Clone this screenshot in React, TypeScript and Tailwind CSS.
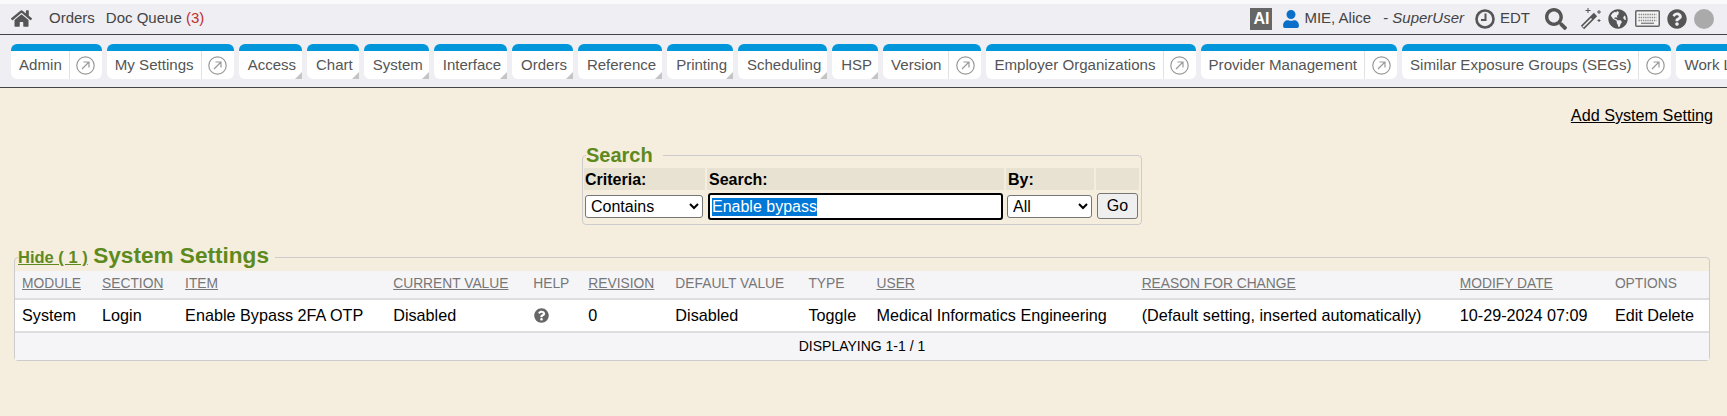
import { useEffect, useRef } from 'react';
import { FaGlobeAmericas, FaHome, FaQuestionCircle, FaSearch, FaUser } from 'react-icons/fa';

const tabs = [
  { label: 'Admin', link: true },
  { label: 'My Settings', link: true },
  { label: 'Access' },
  { label: 'Chart' },
  { label: 'System' },
  { label: 'Interface' },
  { label: 'Orders' },
  { label: 'Reference' },
  { label: 'Printing' },
  { label: 'Scheduling' },
  { label: 'HSP' },
  { label: 'Version', link: true },
  { label: 'Employer Organizations', link: true },
  { label: 'Provider Management', link: true },
  { label: 'Similar Exposure Groups (SEGs)', link: true },
  { label: 'Work List', link: true },
];

const columns = [
  { label: 'MODULE', value: 'System', sort: true, width: 'w-[81px]' },
  { label: 'SECTION', value: 'Login', sort: true, width: 'w-[83px]' },
  { label: 'ITEM', value: 'Enable Bypass 2FA OTP', sort: true, width: 'w-[208px]' },
  { label: 'CURRENT VALUE', value: 'Disabled', sort: true, width: 'w-[140px]' },
  { label: 'HELP', value: '', width: 'w-[55px]' },
  { label: 'REVISION', value: '0', sort: true, width: 'w-[87px]' },
  { label: 'DEFAULT VALUE', value: 'Disabled', width: 'w-[133px]' },
  { label: 'TYPE', value: 'Toggle', width: 'w-[68px]' },
  { label: 'USER', value: 'Medical Informatics Engineering', sort: true, width: 'w-[265px]' },
  { label: 'REASON FOR CHANGE', value: '(Default setting, inserted automatically)', sort: true, width: 'w-[318px]' },
  { label: 'MODIFY DATE', value: '10-29-2024 07:09', sort: true, width: 'w-[155px]' },
  { label: 'OPTIONS', value: 'Edit Delete', width: 'w-[100px]' },
];

function OpenIcon() {
  return (
    <svg width="19" height="19" viewBox="0 0 19 19" fill="none" stroke="#999" strokeWidth="1.2">
      <circle cx="9.5" cy="9.5" r="8.7" />
      <path d="M6 13 L13 6 M7.5 6 H13 V11.5" />
    </svg>
  );
}

function ClockIcon() {
  return (
    <svg width="20" height="20" viewBox="0 0 20 20" fill="none" stroke="#555">
      <circle cx="10" cy="10" r="8.5" strokeWidth="2.6" />
      <path d="M10.5 4.5 V11 H6" strokeWidth="2" />
    </svg>
  );
}

function WandIcon() {
  return (
    <svg width="22" height="23" viewBox="0 0 22 23" fill="none">
      <path d="M2.5 20.5 L15.5 7.5" stroke="#555" strokeWidth="4.6" />
      <path d="M3 20 L11.5 11.5" stroke="#f2f2f2" strokeWidth="1.6" />
      <path d="M8 1v5M5.5 3.5h5M19 3v4M17 5h4M19 12v3M17.5 13.5h3" stroke="#555" strokeWidth="1" />
    </svg>
  );
}

function KeyboardIcon() {
  return (
    <svg width="25" height="17" viewBox="0 0 25 17" fill="none">
      <rect x="0.75" y="0.75" width="23.5" height="15.5" rx="1" fill="#f4f4f4" stroke="#666" strokeWidth="1.5" />
      <path
        d="M3.5 4.5h18M3.5 7.5h18M3.5 10.5h18"
        stroke="#888"
        strokeWidth="1.6"
        strokeDasharray="1.4 0.8"
      />
      <path d="M6 13.3h13" stroke="#888" strokeWidth="1.5" />
    </svg>
  );
}

function MenuTab({ label, link }: { label: string; link?: boolean }) {
  if (link) {
    return (
      <div className="flex h-[35px] shrink-0 rounded-[6px] border-t-[7px] border-[#0096d9] bg-white text-[15.1px]">
        <span className="pl-[8px] pr-[7px] leading-[27px]">{label}</span>
        <span className="flex w-[33px] items-center justify-center border-l border-[#e2e2e2]">
          <OpenIcon />
        </span>
      </div>
    );
  }
  return (
    <div className="relative h-[35px] shrink-0 rounded-t-[6px] rounded-bl-[6px] border-t-[7px] border-[#0096d9] bg-white pl-[9px] pr-[6px] leading-[27px]">
      {label}
      <span className="absolute bottom-0 right-0 h-0 w-0 border-b-[7px] border-l-[7px] border-b-[#c4c4c4] border-l-transparent" />
    </div>
  );
}

export default function App() {
  const inputRef = useRef<HTMLInputElement>(null);

  // the search term shows selected in the picture
  useEffect(() => {
    inputRef.current?.focus();
    inputRef.current?.select();
  }, []);

  return (
    <div className="h-[416px] overflow-hidden bg-[#f5eddd] font-['Liberation_Sans',Arial,sans-serif] text-[16.2px] text-black">
      <div className="h-[4px] bg-[#fafafa]" />

      {/* top bar */}
      <div className="flex h-[31px] items-center border-b border-[#444] bg-[#eeeef3] pb-[1px] text-[15px] text-[#444]">
        <FaHome className="ml-[11px] text-[21px] text-[#555]" />
        <span className="ml-[17px]">Orders</span>
        <span className="ml-[11px]">
          Doc Queue <span className="text-[#c0302a]">(3)</span>
        </span>
        <div className="ml-auto flex items-center pr-[13px]">
          <span className="flex h-[22px] w-[22px] items-center justify-center bg-[#666] text-[16px] font-bold text-white">
            AI
          </span>
          <FaUser className="ml-[10px] text-[18px] text-[#0a6fc9]" />
          <span className="ml-[4px]">MIE, Alice</span>
          <span className="ml-[12px]">
            - <i>SuperUser</i>
          </span>
          <span className="ml-[11px]">
            <ClockIcon />
          </span>
          <span className="ml-[5px]">EDT</span>
          <FaSearch className="ml-[15px] text-[22px] text-[#555]" />
          <span className="ml-[13px]">
            <WandIcon />
          </span>
          <FaGlobeAmericas className="ml-[6px] text-[20px] text-[#555]" />
          <span className="ml-[7px]">
            <KeyboardIcon />
          </span>
          <FaQuestionCircle className="ml-[7px] text-[20px] text-[#555]" />
          <span className="ml-[7px] h-[20px] w-[20px] rounded-full bg-[#aaa]" />
        </div>
      </div>

      {/* menu tabs */}
      <div className="flex h-[53px] gap-[5px] overflow-hidden border-b border-[#444] bg-[#eeeef3] pl-[11px] pt-[9px] text-[15px] text-[#555]">
        {tabs.map((tab) => (
          <MenuTab key={tab.label} label={tab.label} link={tab.link} />
        ))}
      </div>

      <div className="pl-[14px] pr-[17px]">
        <div className="-mr-[3px] mt-[15px] flex h-[24px] items-center justify-end">
          <span className="underline">Add System Setting</span>
        </div>

        {/* search */}
        <fieldset className="ml-[568px] mt-[15px] w-[560px] rounded-[4px] border border-[#ccc] pb-[4px] pl-[1px]">
          <legend className="ml-[2px] pb-[1px] pr-[10px] pt-[1px] text-[20px] font-bold leading-[24px] text-[#5e8a1d]">Search</legend>
          <div className="grid grid-cols-[121px_297px_88px_43px] gap-x-[2px] gap-y-[3px]">
            <div className="h-[22px] bg-[#e8e2d2] pl-[1px] text-[16px] font-bold leading-[23px]">Criteria:</div>
            <div className="h-[22px] bg-[#e8e2d2] pl-[2px] text-[16px] font-bold leading-[23px]">Search:</div>
            <div className="h-[22px] bg-[#e8e2d2] pl-[2px] text-[16px] font-bold leading-[23px]">By:</div>
            <div className="h-[22px] bg-[#e8e2d2]" />
            <select className="ml-[1px] mt-[2px] h-[23px] w-[118px] rounded-[3px] border border-[#767676] bg-white pl-[1px] text-[16px]">
              <option>Contains</option>
            </select>
            <input
              ref={inputRef}
              defaultValue="Enable bypass"
              className="ml-[1px] h-[27px] w-[295px] rounded-[3px] border-2 border-black bg-white px-[2px] text-[16px] outline-none selection:bg-[#0078d7] selection:text-white"
            />
            <select className="ml-[1px] mt-[2px] h-[23px] w-[85px] rounded-[3px] border border-[#767676] bg-white pl-[1px] text-[16px]">
              <option>All</option>
            </select>
            <button className="ml-[1px] h-[26px] w-[41px] rounded-[3px] border border-[#767676] bg-[#efefef] text-[16px]">Go</button>
          </div>
        </fieldset>

        {/* system settings */}
        <fieldset className="mt-[19px] rounded-[4px] border border-[#ccc]">
          <legend className="ml-[3px] pb-[2px] pr-[6px] leading-[24px]">
            <span className="text-[16.5px] font-bold text-[#5e8a1d] underline">Hide ( 1 )</span>{' '}
            <span className="ml-[1px] text-[22.6px] font-bold text-[#5e8a1d]">System Settings</span>
          </legend>
          <table className="w-full table-fixed border-collapse">
            <thead>
              <tr className="h-[28px] border-b-2 border-[#ddd] bg-[#f5f5f8] text-left text-[13.8px] text-[#777]">
                {columns.map((col) => (
                  <th key={col.label} className={`${col.width} pl-[6px] font-normal first:pl-[7px]`}>
                    {col.sort ? <span className="underline">{col.label}</span> : col.label}
                  </th>
                ))}
              </tr>
            </thead>
            <tbody>
              <tr className="h-[33px] border-b-2 border-[#ddd] bg-white">
                {columns.map((col) => (
                  <td key={col.label} className="whitespace-nowrap pl-[6px] first:pl-[7px]">
                    {col.label === 'HELP' ? (
                      <FaQuestionCircle className="ml-[1px] text-[15px] text-[#666]" />
                    ) : (
                      col.value
                    )}
                  </td>
                ))}
              </tr>
              <tr className="h-[28px] bg-[#f5f5f8]">
                <td colSpan={12} className="text-center text-[14px]">
                  DISPLAYING 1-1 / 1
                </td>
              </tr>
            </tbody>
          </table>
        </fieldset>
      </div>
    </div>
  );
}
